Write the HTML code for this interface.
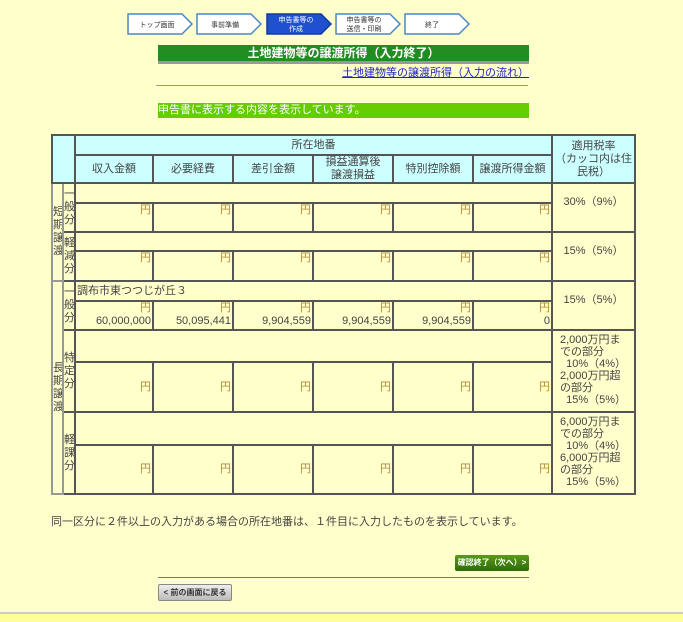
<!DOCTYPE html>
<html><head><meta charset="utf-8"><style>
body{margin:0;width:683px;height:622px;background:#ffffcc;font-family:"Liberation Sans","Noto Sans CJK JP",sans-serif;font-size:11px;color:#444;position:relative;overflow:hidden}
.a{position:absolute}
table{position:absolute;left:51px;top:134px;border-collapse:collapse;table-layout:fixed;width:583px}
td{border:2px solid #555;padding:0 1px;background:#ffffcc;font-size:11px;line-height:13px;overflow:hidden}
td.h{background:#ccffff;text-align:center;color:#444}
td.r{text-align:right;vertical-align:top}
td.v{text-align:center;padding:0;word-break:break-all;width:10px}
td.t{vertical-align:top;padding:12px 2px 0;text-align:center}
td.w{vertical-align:top;padding:3px 2px 0 7px;line-height:12px;white-space:nowrap}
.y{color:#b08a30}
</style></head><body>
<svg class="a" style="left:126px;top:11px" width="350" height="26">
<g stroke="#4a86c8" stroke-width="1.5" fill="#fff">
<polygon points="2,3 56,3 66,13 56,23 2,23"/>
<polygon points="71,3 125,3 135,13 125,23 71,23"/>
<polygon points="141,3 195,3 205,13 195,23 141,23" fill="#1f50d0" stroke="#123a9c"/>
<polygon points="210,3 264,3 274,13 264,23 210,23"/>
<polygon points="279,3 333,3 343,13 333,23 279,23"/>
</g>
<g font-size="7" text-anchor="middle" fill="#333">
<text x="31" y="16">トップ画面</text>
<text x="99" y="16">事前準備</text>
<text x="170" y="11" fill="#fff">申告書等の</text><text x="170" y="20" fill="#fff">作成</text>
<text x="238" y="11">申告書等の</text><text x="238" y="20">送信・印刷</text>
<text x="306" y="16">終了</text>
</g></svg>
<div class="a" style="left:158px;top:45px;width:371px;height:16px;background:#228b22;border-bottom:3px solid #999;color:#fff;font-weight:bold;font-size:12px;text-align:center;line-height:16px">土地建物等の譲渡所得（入力終了）</div>
<div class="a" style="left:340px;top:64px;width:189px;text-align:right;color:#22c;text-decoration:underline;font-size:11px">土地建物等の譲渡所得（入力の流れ）</div>
<div class="a" style="left:156px;top:85px;width:372px;height:1px;background:#999"></div>
<div class="a" style="left:158px;top:103px;width:371px;height:15px;background:#66cc00;color:#fff;font-size:11px;line-height:15px">申告書に表示する内容を表示しています。</div>
<table>
<colgroup><col style="width:11px"><col style="width:12px"><col style="width:78px"><col style="width:80px"><col style="width:80px"><col style="width:80px"><col style="width:80px"><col style="width:79px"><col style="width:83px"></colgroup>
<tr style="height:20px"><td class="h" colspan="2" rowspan="2"></td><td class="h" colspan="6">所在地番</td><td class="h" rowspan="2">適用税率<br>（カッコ内は住民税）</td></tr>
<tr style="height:28px"><td class="h">収入金額</td><td class="h">必要経費</td><td class="h">差引金額</td><td class="h">損益通算後<br>譲渡損益</td><td class="h">特別控除額</td><td class="h">譲渡所得金額</td></tr>
<tr style="height:20px"><td class="v" rowspan="4" style="border-color:#999">短期譲渡</td><td class="v" rowspan="2">一般分</td><td colspan="6"></td><td class="t" rowspan="2">30%（9%）</td></tr>
<tr style="height:29px"><td class="r y">円</td><td class="r y">円</td><td class="r y">円</td><td class="r y">円</td><td class="r y">円</td><td class="r y">円</td></tr>
<tr style="height:19px"><td class="v" rowspan="2">軽減分</td><td colspan="6"></td><td class="t" rowspan="2">15%（5%）</td></tr>
<tr style="height:30px"><td class="r y">円</td><td class="r y">円</td><td class="r y">円</td><td class="r y">円</td><td class="r y">円</td><td class="r y">円</td></tr>
<tr style="height:20px"><td class="v" rowspan="6" style="border-color:#999">長期譲渡</td><td class="v" rowspan="2">一般分</td><td colspan="6">調布市東つつじが丘３</td><td class="t" rowspan="2">15%（5%）</td></tr>
<tr style="height:29px"><td class="r"><span class="y">円</span><br>60,000,000</td><td class="r"><span class="y">円</span><br>50,095,441</td><td class="r"><span class="y">円</span><br>9,904,559</td><td class="r"><span class="y">円</span><br>9,904,559</td><td class="r"><span class="y">円</span><br>9,904,559</td><td class="r"><span class="y">円</span><br>0</td></tr>
<tr style="height:32px"><td class="v" rowspan="2">特定分</td><td colspan="6"></td><td class="w" rowspan="2">2,000万円ま<br>での部分<br>&nbsp;&nbsp;10%（4%）<br>2,000万円超<br>の部分<br>&nbsp;&nbsp;15%（5%）</td></tr>
<tr style="height:50px"><td class="r y" style="vertical-align:middle">円</td><td class="r y" style="vertical-align:middle">円</td><td class="r y" style="vertical-align:middle">円</td><td class="r y" style="vertical-align:middle">円</td><td class="r y" style="vertical-align:middle">円</td><td class="r y" style="vertical-align:middle">円</td></tr>
<tr style="height:33px"><td class="v" rowspan="2">軽課分</td><td colspan="6"></td><td class="w" rowspan="2">6,000万円ま<br>での部分<br>&nbsp;&nbsp;10%（4%）<br>6,000万円超<br>の部分<br>&nbsp;&nbsp;15%（5%）</td></tr>
<tr style="height:49px"><td class="r y" style="vertical-align:middle">円</td><td class="r y" style="vertical-align:middle">円</td><td class="r y" style="vertical-align:middle">円</td><td class="r y" style="vertical-align:middle">円</td><td class="r y" style="vertical-align:middle">円</td><td class="r y" style="vertical-align:middle">円</td></tr>
</table>
<div class="a" style="left:51px;top:513px;font-size:11px">同一区分に２件以上の入力がある場合の所在地番は、１件目に入力したものを表示しています。</div>
<div class="a" style="left:455px;top:555px;width:74px;height:16px;background:linear-gradient(#5a9a1a,#2f6a08);border-radius:2px;color:#fff;font-size:8px;font-weight:bold;text-align:center;line-height:16px">確認終了（次へ）&gt;</div>
<div class="a" style="left:158px;top:577px;width:371px;height:1px;background:#777"></div>
<div class="a" style="left:158px;top:584px;width:72px;height:15px;background:linear-gradient(#eee,#bbb);border:1px solid #888;border-radius:2px;color:#333;font-size:8px;font-weight:bold;text-align:center;line-height:15px">&lt; 前の画面に戻る</div>
<div class="a" style="left:0;top:612px;width:683px;height:2px;background:#ccc"></div>
<div class="a" style="left:0;top:614px;width:683px;height:8px;background:#ffff99"></div>
</body></html>
